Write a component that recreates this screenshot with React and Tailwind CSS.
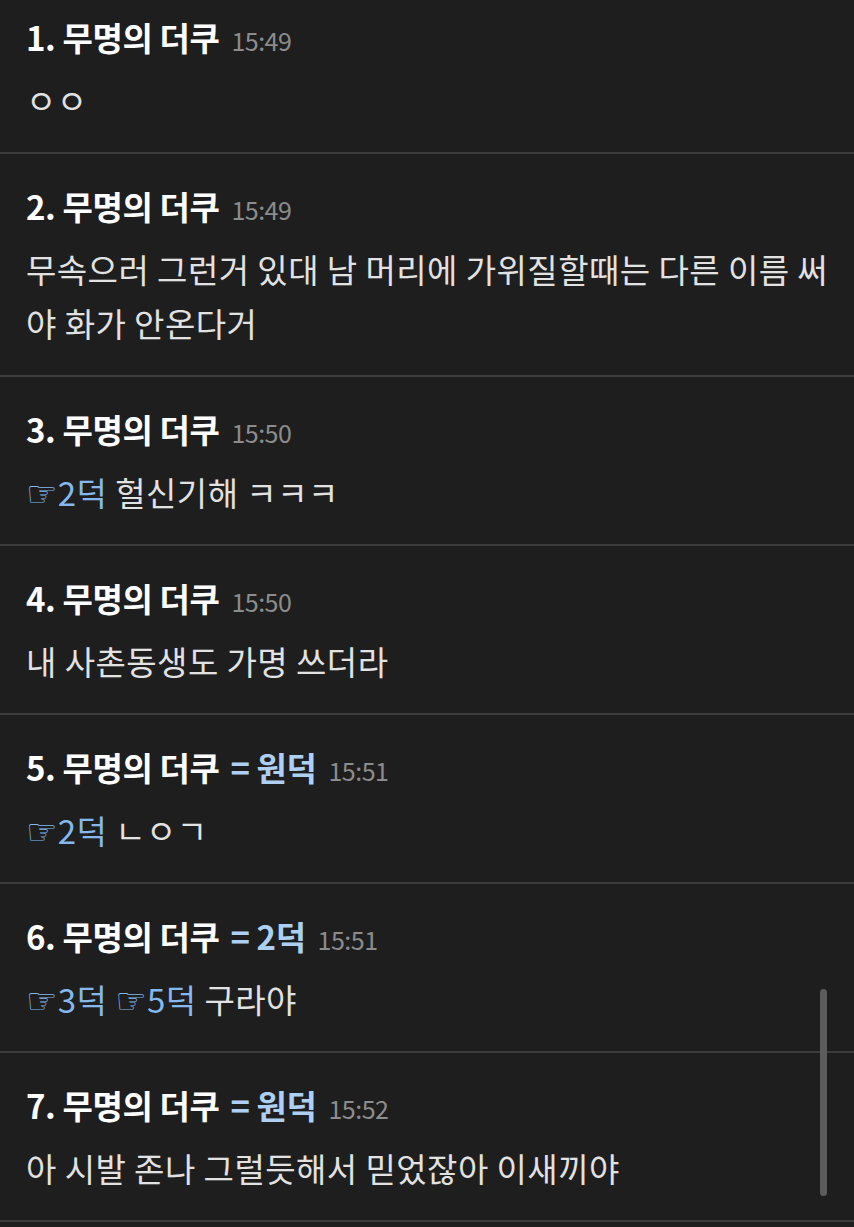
import React from 'react';

// comment thread (dark theme)
const comments = [
  { no: 1, time: '15:49', body: [{ t: 'ㅇㅇ' }] },
  { no: 2, time: '15:49', body: [{ t: '무속으러 그런거 있대 남 머리에 가위질할때는 다른 이름 써야 화가 안온다거' }] },
  { no: 3, time: '15:50', body: [{ ref: '2덕' }, { t: ' 헐신기해 ㅋㅋㅋ' }] },
  { no: 4, time: '15:50', body: [{ t: '내 사촌동생도 가명 쓰더라' }] },
  { no: 5, time: '15:51', alias: '원덕', body: [{ ref: '2덕' }, { t: ' ㄴㅇㄱ' }] },
  { no: 6, time: '15:51', alias: '2덕', body: [{ ref: '3덕' }, { t: ' ' }, { ref: '5덕' }, { t: ' 구라야' }] },
  { no: 7, time: '15:52', alias: '원덕', body: [{ t: '아 시발 존나 그럴듯해서 믿었잖아 이새끼야' }] },
];

const font = { fontFamily: '"Noto Sans CJK KR", "Noto Sans", sans-serif' };

const Comment = ({ c, first }) => (
  <div className={`border-b-2 border-[#3c3c3c] pl-[26px] pr-[14px] pb-[25px] ${first ? 'pt-[17px]' : 'pt-[32px]'}`}>
    <div className="flex items-baseline h-[40px] leading-[40px]">
      <span className="text-[33px] font-bold text-white tracking-[-0.4px]">{c.no}. 무명의 더쿠</span>
      {c.alias && (
        <span className="ml-[11px] text-[33px] font-bold text-[#add0f2] tracking-[-0.4px]">= {c.alias}</span>
      )}
      <span className="ml-[12px] text-[25px] text-[#8c8c8c] tracking-[-0.5px]">{c.time}</span>
    </div>
    <p className="mt-[16px] text-[33px] leading-[54px] tracking-[0.45px] text-[#e2e2e2]">
      {c.body.map((b, i) =>
        b.ref ? (
          <span key={i} className="text-[#85b8ec]">
            <span className="text-[35px] leading-none" style={{ fontFamily: '"DejaVu Sans", sans-serif' }}>☞</span>
            {b.ref}
          </span>
        ) : (
          <span key={i}>{b.t}</span>
        )
      )}
    </p>
  </div>
);

export default function App() {
  return (
    <div className="relative w-[854px] h-[1227px] overflow-hidden bg-[#1e1e1e]" style={font}>
      {comments.map((c, i) => (
        <Comment key={c.no} c={c} first={i === 0} />
      ))}
      {/* scroll thumb */}
      <div className="absolute left-[820px] top-[989px] w-[7px] h-[207px] rounded-full bg-[#5c5c5c]" />
    </div>
  );
}
